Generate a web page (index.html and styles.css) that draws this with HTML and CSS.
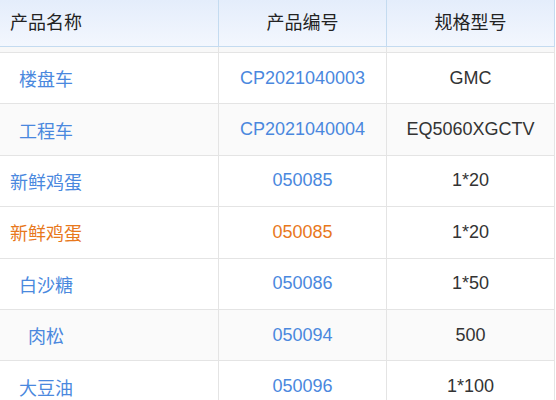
FILE: index.html
```html
<!DOCTYPE html>
<html lang="zh-CN">
<head>
<meta charset="utf-8">
<title>产品列表</title>
<link rel="stylesheet" href="styles.css">
</head>
<body>
<div class="grid">
  <div class="head">
    <div class="hc c1"><span class="nm">产品名称</span></div>
    <div class="hc">产品编号</div>
    <div class="hc">规格型号</div>
  </div>
  <div class="spacer">
    <div class="sc"></div><div class="sc"></div><div class="sc"></div>
  </div>
  <div class="row">
    <div class="cell c1 link"><span class="nm">楼盘车</span></div>
    <div class="cell link">CP2021040003</div>
    <div class="cell">GMC</div>
  </div>
  <div class="row alt">
    <div class="cell c1 link"><span class="nm">工程车</span></div>
    <div class="cell link">CP2021040004</div>
    <div class="cell">EQ5060XGCTV</div>
  </div>
  <div class="row">
    <div class="cell c1 link"><span class="nm">新鲜鸡蛋</span></div>
    <div class="cell link">050085</div>
    <div class="cell">1*20</div>
  </div>
  <div class="row">
    <div class="cell c1 warn"><span class="nm">新鲜鸡蛋</span></div>
    <div class="cell warn">050085</div>
    <div class="cell">1*20</div>
  </div>
  <div class="row">
    <div class="cell c1 link"><span class="nm">白沙糖</span></div>
    <div class="cell link">050086</div>
    <div class="cell">1*50</div>
  </div>
  <div class="row alt">
    <div class="cell c1 link"><span class="nm">肉松</span></div>
    <div class="cell link">050094</div>
    <div class="cell">500</div>
  </div>
  <div class="row">
    <div class="cell c1 link"><span class="nm">大豆油</span></div>
    <div class="cell link">050096</div>
    <div class="cell">1*100</div>
  </div>
</div>
</body>
</html>
```
FILE: styles.css
```css
html, body {
  margin: 0;
  padding: 0;
  background: #ffffff;
}
body {
  font-family: "Liberation Sans", "Noto Sans CJK SC", sans-serif;
  font-size: 18px;
  color: #333333;
  overflow: hidden;
}
.grid {
  width: 555px;
}
.head, .spacer, .row {
  display: grid;
  grid-template-columns: 219px 168px 168px;
}
.head {
  height: 46px;
  border-bottom: 1px solid #c4dbf0;
  background: linear-gradient(#e4edfb, #f3f7fe);
}
.hc {
  display: flex;
  align-items: center;
  justify-content: center;
  border-right: 1px solid #c4dbf0;
  color: #222222;
  padding-bottom: 4px;
}
.c1 {
  justify-content: flex-start;
  padding-left: 10px;
}
.nm {
  display: inline-block;
  width: 72px;
  text-align: center;
}
.spacer {
  height: 5px;
  background: #f8f8f8;
  border-bottom: 1px solid #e4e4e4;
}
.sc {
  border-right: 1px solid #e4e4e4;
}
.row {
  height: 50.4px;
  border-bottom: 1px solid #e4e4e4;
  background: #ffffff;
}
.row.alt {
  background: #fafafa;
}
.cell {
  display: flex;
  align-items: center;
  justify-content: center;
  border-right: 1px solid #e4e4e4;
  color: #333333;
}
.cell.c1 {
  justify-content: flex-start;
}
.link {
  color: #4a88de;
}
.warn {
  color: #e8781c;
}
```
